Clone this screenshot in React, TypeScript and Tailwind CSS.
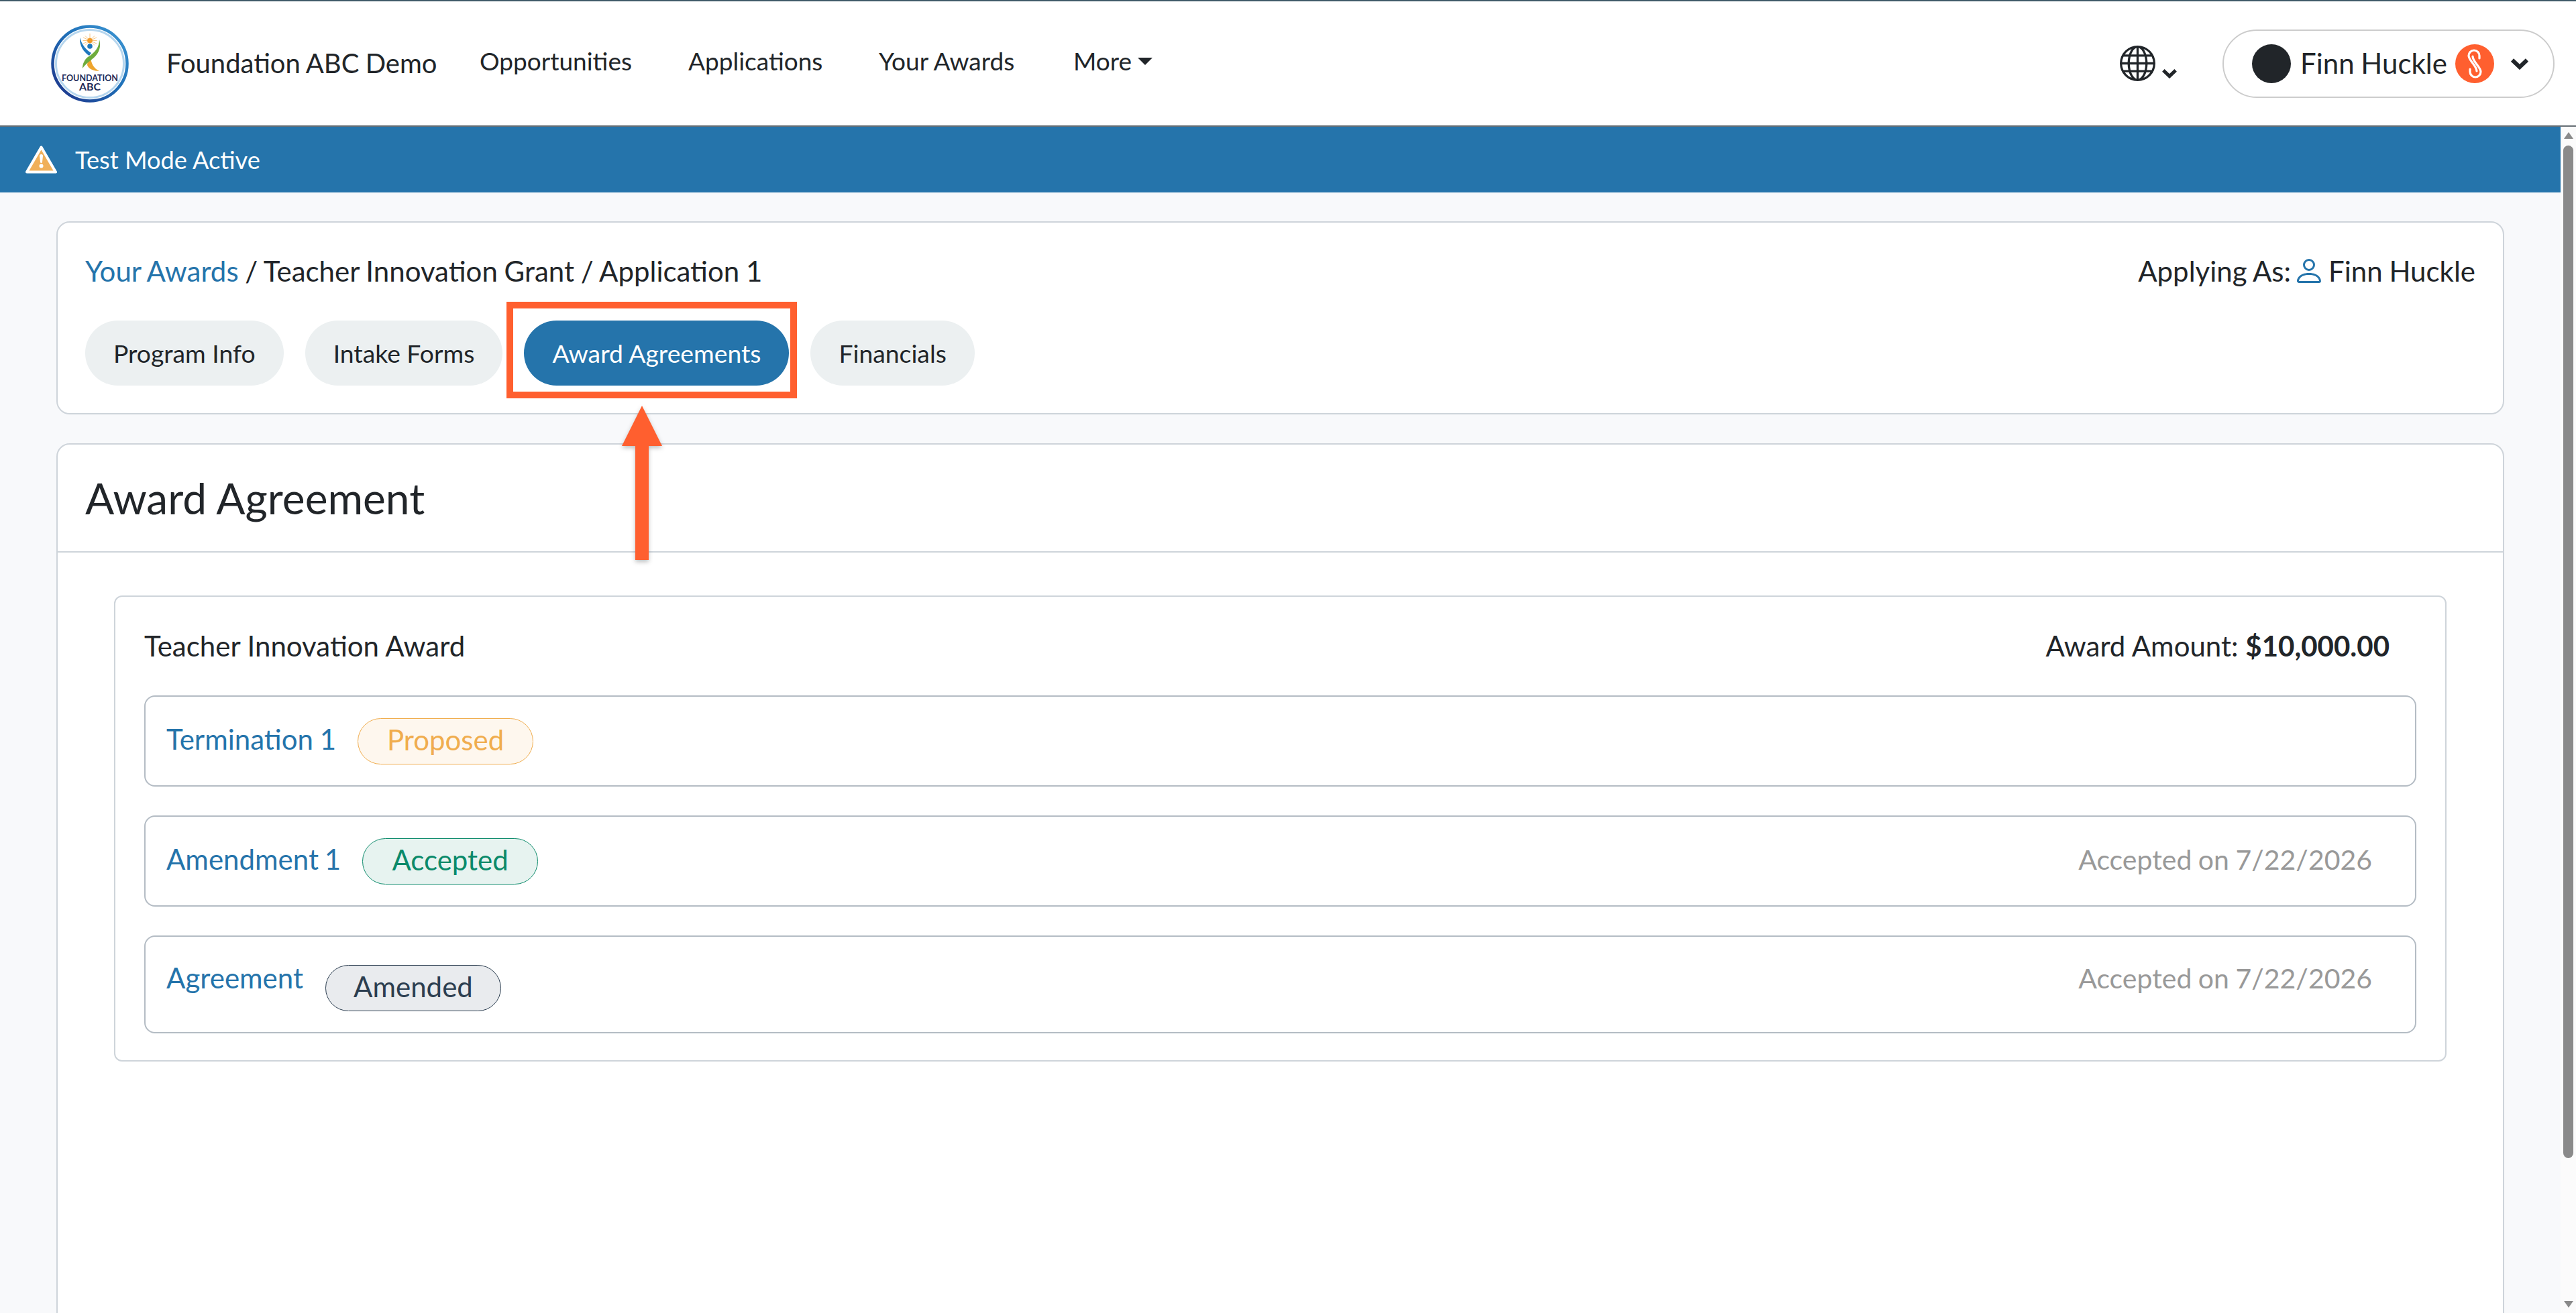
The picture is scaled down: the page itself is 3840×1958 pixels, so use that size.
import { BsGlobe, BsPerson } from "react-icons/bs";

const navLinks = [
  { label: "Opportunities", className: "w-[311px]" },
  { label: "Applications", className: "w-[284px]" },
  { label: "Your Awards", className: "w-[290px]" },
];

const tabs = [
  { label: "Program Info", active: false },
  { label: "Intake Forms", active: false },
  { label: "Award Agreements", active: true },
  { label: "Financials", active: false },
];

const Chevron = ({ className }: { className: string }) => (
  <svg viewBox="0 0 28 18" className={className}>
    <path d="M3 3.5 14 14 25 3.5" fill="none" stroke="#212529" strokeWidth="6" />
  </svg>
);

const Logo = () => (
  <svg viewBox="0 0 116 116" className="h-[116px] w-[116px] shrink-0">
    <defs>
      <linearGradient id="ring" x1="0" y1="1" x2="1" y2="0">
        <stop offset="0" stopColor="#1d2f86" />
        <stop offset="0.55" stopColor="#1f70b8" />
        <stop offset="1" stopColor="#3f9ad6" />
      </linearGradient>
    </defs>
    <circle cx="58" cy="58" r="55.5" fill="#fff" stroke="url(#ring)" strokeWidth="4.5" />
    <circle cx="58" cy="58" r="50.5" fill="none" stroke="#b6d6ee" strokeWidth="3" />
    <path d="M58 13v21M47.500 23.500h21M51 16.500l14 14M65 16.500l-14 14M48 19l20 9M68 19l-20 9" stroke="#f4b763" strokeWidth="0.8" />
    <circle cx="58" cy="23.500" r="3.800" fill="#f19a27" />
    <circle cx="58" cy="32" r="3.800" fill="#1f78bd" />
    <path d="M43 19C42 31 49 41 57 46L60 42C53 38 46 30 43 19Z" fill="#1f78bd" />
    <path d="M59 49C60 58 64 65 72 69 64 69 56 66 54 60 54 56 56 52 59 49Z" fill="#eea52e" />
    <path d="M72 22C72 34 65 42 55 48 50 52 47 58 47 65 52 58 58 54 64 49 72 42 75 32 72 22Z" fill="#6eac3c" />
    <text x="58" y="84" textAnchor="middle" textLength="84" lengthAdjust="spacingAndGlyphs" fontFamily="Lato, sans-serif" fontWeight="700" fontSize="13" fill="#1e2c59">FOUNDATION</text>
    <text x="58" y="98" textAnchor="middle" textLength="32" lengthAdjust="spacingAndGlyphs" fontFamily="Lato, sans-serif" fontWeight="700" fontSize="15" fill="#1e2c59">ABC</text>
  </svg>
);

const SLogo = () => (
  <svg viewBox="0 0 58 58" className="h-[58px] w-[58px] shrink-0">
    <circle cx="29" cy="29" r="29" fill="#ff5f2f" />
    <path d="M36 21V17A8 8 0 0 0 20 17C20 24 32 32 32 40" fill="none" stroke="#fff" strokeWidth="3.200" strokeLinecap="round" />
    <path d="M22 37V41A8 8 0 0 0 38 41C38 34 26 26 26 18" fill="none" stroke="#fff" strokeWidth="3.200" strokeLinecap="round" />
  </svg>
);

const WarnIcon = () => (
  <svg viewBox="0 0 47 42" className="h-[42px] w-[47px] shrink-0">
    <path d="M23.500 2.500 45 39.500H2Z" fill="#f0b05a" stroke="#fff" strokeWidth="4" strokeLinejoin="round" />
    <path d="M21 15.500a2.500 2.500 0 0 1 5 0l-1 9a1.500 1.500 0 0 1-3 0Z" fill="#fff" />
    <circle cx="23.500" cy="30.500" r="3" fill="#fff" />
  </svg>
);

const Badge = ({ label, className }: { label: string; className: string }) => (
  <span className={`flex h-[69px] w-[262px] items-center justify-center rounded-full border-[1.5px] pb-[4px] text-[42px] ${className}`}>
    {label}
  </span>
);

export default function App() {
  return (
    <div className="flex h-screen flex-col overflow-hidden bg-[#f8f9fb] font-['Lato',sans-serif] text-[#212529]">
      <header className="flex h-[189px] shrink-0 items-center border-y-2 border-t-[#3f5a68] border-b-[#666e75] bg-white pl-[76px] pr-[32px]">
        <Logo />
        <span className="mb-[1px] ml-[56px] w-[467px] text-[40px] [word-spacing:-1px]">Foundation ABC Demo</span>
        {navLinks.map((link) => (
          <a key={link.label} className={`${link.className} mb-[7px] text-[37px]`}>
            {link.label}
          </a>
        ))}
        <a className="mb-[7px] flex items-center text-[37px]">
          More
          <span className="ml-[9px] h-0 w-0 border-x-[11px] border-t-[11px] border-x-transparent border-t-[#212529]" />
        </a>
        <div className="ml-auto flex items-center">
          <BsGlobe className="h-[53px] w-[53px] text-[#212529]" />
          <Chevron className="ml-[9px] mt-[30px] h-[15px] w-[24px]" />
          <div className="ml-[67px] flex h-[102px] w-[495px] items-center rounded-full border-2 border-[#cccccc] pl-[42px]">
            <span className="h-[58px] w-[58px] shrink-0 rounded-full bg-[#212529]" />
            <span className="ml-[14px] w-[231px] text-[42px] [word-spacing:-1px]">Finn Huckle</span>
            <SLogo />
            <Chevron className="ml-[24px] h-[18px] w-[28px]" />
          </div>
        </div>
      </header>

      <div className="flex min-h-0 flex-1">
        <div className="min-w-0 flex-1">
          <div className="flex h-[98px] items-center bg-[#2574ab] pl-[38px] text-white">
            <WarnIcon />
            <span className="ml-[27px] text-[36.200px]">Test Mode Active</span>
          </div>

          <main className="relative flex flex-col gap-[43px] px-[84px] pt-[43px]">
            <section className="h-[288px] rounded-[20px] border-2 border-[#ced4da] bg-white px-[41px] pt-[44px]">
              <div className="flex items-center justify-between text-[42px] leading-[56px] [word-spacing:-1px]">
                <div>
                  <a className="text-[#2574ab]">Your Awards</a> / Teacher Innovation Grant / Application 1
                </div>
                <div className="flex items-center">
                  Applying As:
                  <BsPerson className="ml-[3px] mr-[5px] h-[48px] w-[48px] text-[#2574ab]" />
                  Finn Huckle
                </div>
              </div>
              <div className="mt-[46px] flex gap-[32px]">
                {tabs.map((tab) => (
                  <button
                    key={tab.label}
                    className={`h-[97px] rounded-full px-[42px] text-[37.300px] ${tab.active ? "bg-[#2574ab] text-white" : "bg-[#ecf0f1] text-[#212529]"}`}
                  >
                    {tab.label}
                  </button>
                ))}
              </div>
            </section>

            <section className="h-[1300px] rounded-t-[20px] border-2 border-[#ced4da] bg-white">
              <div className="flex h-[161px] items-center border-b-2 border-[#ced4da] px-[41px]">
                <h1 className="text-[64px]">Award Agreement</h1>
              </div>
              <div className="mx-[84px] mt-[64px] h-[695px] rounded-[12px] border-2 border-[#ced4da] px-[43px]">
                <div className="flex h-[147px] items-center justify-between pr-[40px] text-[42px]">
                  <span>Teacher Innovation Award</span>
                  <span>
                    Award Amount: <b>$10,000.00</b>
                  </span>
                </div>
                <div className="flex flex-col gap-[43px]">
                  <div className="flex h-[136px] items-center rounded-[16px] border-2 border-[#b4bcc4] px-[31px]">
                    <a className="mb-[5px] text-[42px] text-[#2574ab] [word-spacing:-1px]">Termination 1</a>
                    <Badge label="Proposed" className="ml-[32px] border-[#f0ad4e] bg-[#fef7ee] text-[#f0ad4e]" />
                  </div>
                  <div className="flex h-[136px] items-center justify-between rounded-[16px] border-2 border-[#b4bcc4] pl-[31px] pr-[64px]">
                    <div className="flex items-center">
                      <a className="mb-[5px] text-[42px] text-[#2574ab] [word-spacing:-2px]">Amendment 1</a>
                      <Badge label="Accepted" className="ml-[32px] border-[#0b8a6a] bg-[#e7f3f0] text-[#0b8a6a]" />
                    </div>
                    <span className="mb-[5px] text-[41px] text-[#999999] [word-spacing:-1px]">Accepted on 7/22/2026</span>
                  </div>
                  <div className="flex h-[146px] justify-between rounded-[16px] border-2 border-[#b4bcc4] pl-[31px] pr-[64px]">
                    <div className="flex items-start">
                      <a className="mt-[30px] text-[42px] text-[#2574ab]">Agreement</a>
                      <Badge label="Amended" className="ml-[33px] mt-[42px] border-[#2c3e50] bg-[#e9ebee] text-[#2c3e50]" />
                    </div>
                    <span className="mt-[31px] text-[41px] text-[#999999] [word-spacing:-1px]">Accepted on 7/22/2026</span>
                  </div>
                </div>
              </div>
            </section>

            {/* callout around the active tab */}
            <div className="absolute left-[755px] top-[163px] h-[144px] w-[433px] border-[10px] border-[#ff5f2f]" />
            <svg viewBox="0 0 60 230" className="absolute left-[927px] top-[318px] h-[230px] w-[60px] drop-shadow-[0_3px_3px_rgba(0,0,0,0.25)]">
              <path d="M30 0 60 60H40V230H20V60H0Z" fill="#ff5f2f" />
            </svg>
          </main>
        </div>

        <div className="flex w-[23px] shrink-0 flex-col items-center bg-[#fbfbfb] py-[8px]">
          <span className="h-0 w-0 border-x-[7px] border-b-[10px] border-x-transparent border-b-[#8a8a8a]" />
          <span className="mt-[10px] h-[1510px] w-[15px] rounded-full bg-[#8a8a8a]" />
          <span className="mt-auto h-0 w-0 border-x-[7px] border-t-[10px] border-x-transparent border-t-[#8a8a8a]" />
        </div>
      </div>
    </div>
  );
}
